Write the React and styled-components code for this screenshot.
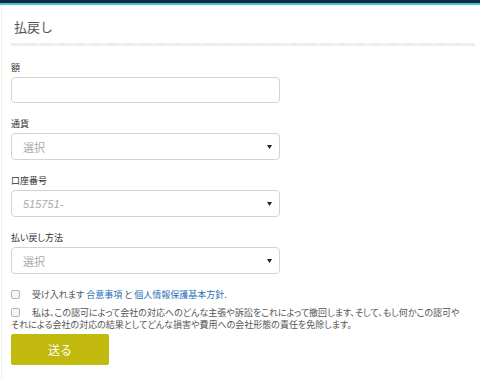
import React from 'react';
import styled, { createGlobalStyle } from 'styled-components';

const GlobalStyle = createGlobalStyle`
  html, body {
    margin: 0;
    padding: 0;
    background: #fff;
  }
  body {
    font-family: "Liberation Sans", "Noto Sans CJK JP", sans-serif;
    color: #333;
  }
`;

const jp = `"Noto Sans CJK JP", "Liberation Sans", sans-serif`;

const TopBar = styled.div`
  height: 3px;
  background: #0b2d3f;
  border-bottom: 2px solid #3fc2ea;
`;

const Panel = styled.div`
  border-left: 1px solid #f0f0f0;
  margin-left: 1px;
  padding: 14px 5px 16px 9px;
`;

const Title = styled.h1`
  margin: 0 0 0 3px;
  font-family: ${jp};
  font-weight: normal;
  font-size: 13px;
  line-height: 16px;
  color: #555;
`;

const Divider = styled.div`
  height: 3px;
  margin: 8px 0 16px;
  background-color: #f4f4f4;
  background-image: repeating-linear-gradient(45deg, #e8e8e8 0 1px, transparent 1px 2px);
`;

const Field = styled.div`
  margin-bottom: 15px;
`;

const Label = styled.label`
  display: block;
  margin-bottom: 3px;
  font-family: ${jp};
  font-size: 9px;
  line-height: 12px;
  color: #333;
  font-feature-settings: "palt";
`;

const Box = styled.div`
  box-sizing: border-box;
  width: 269px;
  height: ${({ tall }) => (tall ? 27 : 26)}px;
  border: 1px solid #d3d3d3;
  border-radius: 4px;
  display: flex;
  align-items: center;
  justify-content: space-between;
  padding: 0 7px 0 11px;
  background: #fff;
`;

const Placeholder = styled.span`
  font-family: ${({ italic }) => (italic ? `"Liberation Sans", sans-serif` : jp)};
  font-style: ${({ italic }) => (italic ? 'italic' : 'normal')};
  font-size: 11px;
  color: #aaa;
`;

const Caret = () => (
  <svg width="5" height="4" viewBox="0 0 5 4">
    <polygon points="0,0 5,0 2.5,4" fill="#222" />
  </svg>
);

const Agree = styled.p`
  margin: 0 0 6px 0;
  width: 450px;
  font-family: ${jp};
  font-size: 9px;
  line-height: 12px;
  color: #555;
  font-feature-settings: "palt";
  &:last-of-type {
    margin-bottom: 0;
  }
`;

const Check = styled.span`
  display: inline-block;
  box-sizing: border-box;
  width: 9px;
  height: 9px;
  border: 1px solid #b5b5b5;
  border-radius: 2px;
  background: #f6f6f6;
  margin-right: 12px;
  vertical-align: -1px;
`;

const Link = styled.a`
  color: #2a6fb6;
  text-decoration: none;
`;

const Submit = styled.button`
  display: block;
  margin-top: 3px;
  width: 98px;
  height: 31px;
  border: none;
  border-radius: 2px;
  background: #c1b90d;
  color: #fff;
  font-family: ${jp};
  font-size: 12px;
  cursor: pointer;
`;

const SelectBox = ({ text, italic }) => (
  <Box tall>
    <Placeholder italic={italic}>{text}</Placeholder>
    <Caret />
  </Box>
);

export default function App() {
  return (
    <>
      <GlobalStyle />
      <TopBar />
      <Panel>
        <Title>払戻し</Title>
        <Divider />
        <Field>
          <Label>額</Label>
          <Box />
        </Field>
        <Field>
          <Label>通貨</Label>
          <SelectBox text="選択" />
        </Field>
        <Field>
          <Label>口座番号</Label>
          <SelectBox text="515751-" italic />
        </Field>
        <Field>
          <Label>払い戻し方法</Label>
          <SelectBox text="選択" />
        </Field>
        <Agree>
          <Check />
          受け入れます <Link href="#">合意事項</Link> と <Link href="#">個人情報保護基本方針</Link>.
        </Agree>
        <Agree>
          <Check />
          私は、この認可によって会社の対応へのどんな主張や訴訟をこれによって撤回します、そして、もし何かこの認可やそれによる会社の対応の結果としてどんな損害や費用への会社形態の責任を免除します。
        </Agree>
        <Submit>送る</Submit>
      </Panel>
    </>
  );
}
